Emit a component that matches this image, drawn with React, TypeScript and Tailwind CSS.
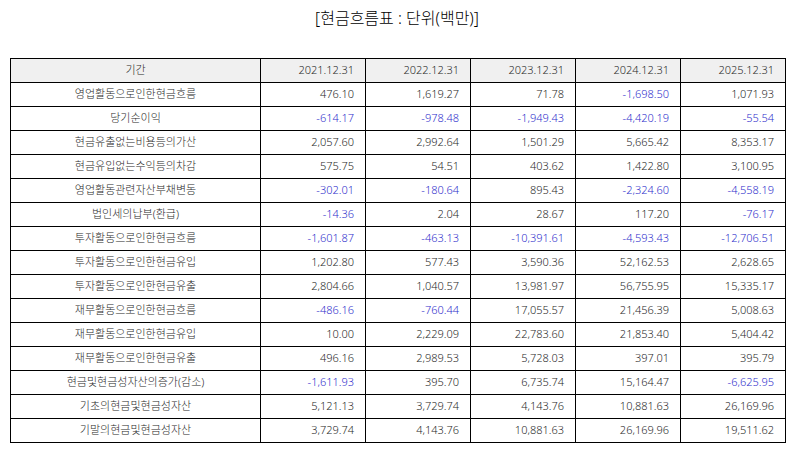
const years = ['2021.12.31', '2022.12.31', '2023.12.31', '2024.12.31', '2025.12.31']

const rows: [string, string[]][] = [
  ['영업활동으로인한현금흐름', ['476.10', '1,619.27', '71.78', '-1,698.50', '1,071.93']],
  ['당기순이익', ['-614.17', '-978.48', '-1,949.43', '-4,420.19', '-55.54']],
  ['현금유출없는비용등의가산', ['2,057.60', '2,992.64', '1,501.29', '5,665.42', '8,353.17']],
  ['현금유입없는수익등의차감', ['575.75', '54.51', '403.62', '1,422.80', '3,100.95']],
  ['영업활동관련자산부채변동', ['-302.01', '-180.64', '895.43', '-2,324.60', '-4,558.19']],
  ['법인세의납부(환급)', ['-14.36', '2.04', '28.67', '117.20', '-76.17']],
  ['투자활동으로인한현금흐름', ['-1,601.87', '-463.13', '-10,391.61', '-4,593.43', '-12,706.51']],
  ['투자활동으로인한현금유입', ['1,202.80', '577.43', '3,590.36', '52,162.53', '2,628.65']],
  ['투자활동으로인한현금유출', ['2,804.66', '1,040.57', '13,981.97', '56,755.95', '15,335.17']],
  ['재무활동으로인한현금흐름', ['-486.16', '-760.44', '17,055.57', '21,456.39', '5,008.63']],
  ['재무활동으로인한현금유입', ['10.00', '2,229.09', '22,783.60', '21,853.40', '5,404.42']],
  ['재무활동으로인한현금유출', ['496.16', '2,989.53', '5,728.03', '397.01', '395.79']],
  ['현금및현금성자산의증가(감소)', ['-1,611.93', '395.70', '6,735.74', '15,164.47', '-6,625.95']],
  ['기초의현금및현금성자산', ['5,121.13', '3,729.74', '4,143.76', '10,881.63', '26,169.96']],
  ['기말의현금및현금성자산', ['3,729.74', '4,143.76', '10,881.63', '26,169.96', '19,511.62']],
]

export default function App() {
  return (
    <div className="w-[794px] h-[452px] bg-white text-[#2a2a2a] font-light font-['Noto_Sans','Noto_Sans_CJK_KR',sans-serif]">
      <div className="h-[46px] flex items-center justify-center pb-[10px] text-[16px] text-black">
        [현금흐름표 : 단위(백만)]
      </div>
      <div className="pt-[12px] pl-[10px]">
        <table className="w-[775px] table-fixed border-collapse text-[11px]">
          <colgroup>
            <col className="w-[250px]" />
            <col className="w-[105px]" />
            <col className="w-[105px]" />
            <col className="w-[105px]" />
            <col className="w-[105px]" />
            <col className="w-[105px]" />
          </colgroup>
          <thead>
            <tr className="h-[24px] bg-[#f0f0f0]">
              <th className="border border-black font-light text-center p-0">기간</th>
              {years.map(y => (
                <th key={y} className="border border-black font-light text-right pr-[11px] p-0">{y}</th>
              ))}
            </tr>
          </thead>
          <tbody>
            {rows.map(([label, vals]) => (
              <tr key={label} className="h-[24px]">
                <td className="border border-black text-center p-0">{label}</td>
                {vals.map((v, i) => (
                  <td key={i}
                    className={`border border-black text-right p-0 pr-[11px] ${v.startsWith('-') ? 'text-[#2f2fcc]' : ''}`}>
                    {v}
                  </td>
                ))}
              </tr>
            ))}
          </tbody>
        </table>
      </div>
    </div>
  )
}
